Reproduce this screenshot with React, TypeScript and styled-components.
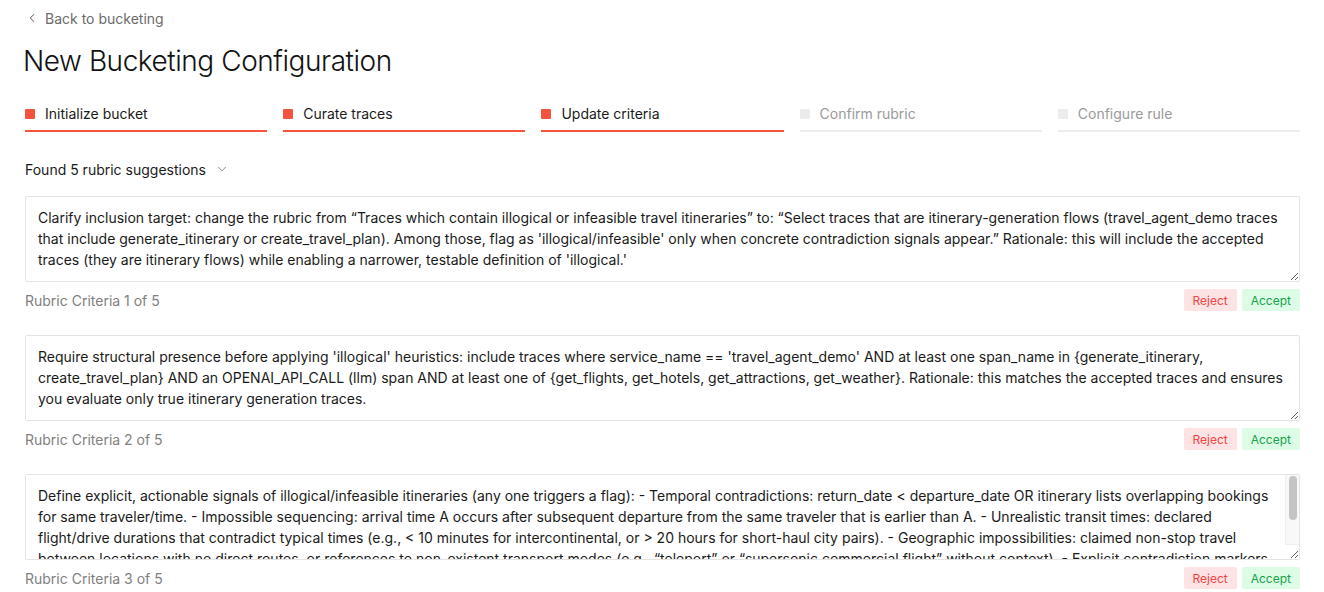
import React, { useLayoutEffect, useRef, useState } from "react";
import styled, { createGlobalStyle } from "styled-components";
import { ChevronLeft, ChevronDown } from "lucide-react";

const GlobalStyle = createGlobalStyle`
  html, body { margin: 0; padding: 0; overflow: hidden; background: #ffffff; }
  body { font-family: Inter, "Noto Sans", sans-serif; color: #1a1a1a; }
  * { box-sizing: border-box; }
`;

const Page = styled.div`
  padding: 8px 24px 0 25px;
  display: flex;
  flex-direction: column;
`;

const BackLink = styled.a`
  display: flex;
  align-items: center;
  gap: 6px;
  font-size: 14px;
  color: #6b6b6b;
  text-decoration: none;
  height: 20px;
  cursor: pointer;
`;

const Title = styled.h1`
  margin: 15px 0 0 -2px;
  font-size: 28px;
  font-weight: 300;
  line-height: 36px;
  letter-spacing: -0.45px;
  color: #111;
`;

const Steps = styled.div`
  display: grid;
  grid-template-columns: repeat(5, 1fr);
  gap: 16px;
  margin-top: 24px;
`;

const Step = styled.div<{ $active: boolean }>`
  display: flex;
  align-items: center;
  gap: 10px;
  height: 29px;
  padding-bottom: 6px;
  border-bottom: 2px solid ${(p) => (p.$active ? "#f5533c" : "#ededed")};
  font-size: 14px;
  color: ${(p) => (p.$active ? "#1a1a1a" : "#9a9a9a")};
`;

const StepMark = styled.span<{ $active: boolean }>`
  width: 10px;
  height: 10px;
  border-radius: 1px;
  background: ${(p) => (p.$active ? "#f5533c" : "#ececec")};
`;

const SuggestHeader = styled.div`
  display: flex;
  align-items: center;
  gap: 9px;
  margin-top: 27px;
  font-size: 14px;
  color: #1a1a1a;
  height: 20px;
  svg { color: #777; }
`;

const List = styled.div`
  display: flex;
  flex-direction: column;
  gap: 24px;
  margin-top: 17px;
`;

const Card = styled.div`
  display: flex;
  flex-direction: column;
  gap: 7px;
`;

const AreaWrap = styled.div`
  position: relative;
  display: flex;
`;

const Area = styled.textarea`
  width: 100%;
  height: 86px;
  padding: 10px 12px;
  border: 1px solid #e4e4e4;
  border-radius: 2px;
  font-family: Inter, "Noto Sans", sans-serif;
  font-size: 14px;
  line-height: 21px;
  color: #1a1a1a;
  resize: vertical;
  outline: none;
`;

const ScrollTrack = styled.div`
  position: absolute;
  top: 1px;
  right: 1px;
  bottom: 15px;
  width: 14px;
  background: #f8f8f8;
  border-left: 1px solid #efefef;
  border-bottom: 1px solid #efefef;
  pointer-events: none;
`;

const ScrollThumb = styled.div`
  position: absolute;
  left: 3px;
  width: 8px;
  border-radius: 4px;
  background: #c4c4c4;
`;

const Footer = styled.div`
  display: flex;
  align-items: center;
  justify-content: space-between;
`;

const Label = styled.span`
  font-size: 14px;
  color: #808080;
`;

const Actions = styled.div`
  display: flex;
  gap: 5px;
`;

const ActionButton = styled.button<{ $kind: "reject" | "accept" }>`
  height: 22px;
  padding: 0 9px;
  border: none;
  border-radius: 2px;
  font-family: Inter, "Noto Sans", sans-serif;
  font-size: 12px;
  cursor: pointer;
  background: ${(p) => (p.$kind === "reject" ? "#fde3e3" : "#dcfce6")};
  color: ${(p) => (p.$kind === "reject" ? "#ef4444" : "#16a34a")};
`;

const steps = [
  { label: "Initialize bucket", active: true },
  { label: "Curate traces", active: true },
  { label: "Update criteria", active: true },
  { label: "Confirm rubric", active: false },
  { label: "Configure rule", active: false },
];

const suggestions = [
  "Clarify inclusion target: change the rubric from \u201CTraces which contain illogical or infeasible travel itineraries\u201D to: \u201CSelect traces that are itinerary-generation flows (travel_agent_demo traces that include generate_itinerary or create_travel_plan). Among those, flag as 'illogical/infeasible' only when concrete contradiction signals appear.\u201D Rationale: this will include the accepted traces (they are itinerary flows) while enabling a narrower, testable definition of 'illogical.'",
  "Require structural presence before applying 'illogical' heuristics: include traces where service_name == 'travel_agent_demo' AND at least one span_name in {generate_itinerary, create_travel_plan} AND an OPENAI_API_CALL (llm) span AND at least one of {get_flights, get_hotels, get_attractions, get_weather}. Rationale: this matches the accepted traces and ensures you evaluate only true itinerary generation traces.",
  "Define explicit, actionable signals of illogical/infeasible itineraries (any one triggers a flag): - Temporal contradictions: return_date < departure_date OR itinerary lists overlapping bookings for same traveler/time. - Impossible sequencing: arrival time A occurs after subsequent departure from the same traveler that is earlier than A. - Unrealistic transit times: declared flight/drive durations that contradict typical times (e.g., < 10 minutes for intercontinental, or > 20 hours for short-haul city pairs). - Geographic impossibilities: claimed non-stop travel between locations with no direct routes, or references to non-existent transport modes (e.g., \u201Cteleport\u201D or \u201Csupersonic commercial flight\u201D without context). - Explicit contradiction markers within the itinerary text, such as a traveler being in two cities at the same time, or a hotel check-out that precedes check-in.",
  "Exclude traces that fail before itinerary generation completes (e.g., error spans on generate_itinerary or create_travel_plan) so that incomplete outputs are not labeled as illogical.",
  "Add confidence guidance: only flag when at least one concrete contradiction signal is present in the final itinerary output; otherwise mark as not matching.",
];

function CriteriaArea({ text }: { text: string }) {
  const ref = useRef<HTMLTextAreaElement>(null);
  const [thumb, setThumb] = useState<number | null>(null);

  useLayoutEffect(() => {
    const el = ref.current;
    if (!el) return;
    if (el.scrollHeight > el.clientHeight + 1) {
      const track = el.clientHeight - 15 - 4;
      setThumb(Math.max(24, Math.round((track * el.clientHeight) / el.scrollHeight)));
    } else {
      setThumb(null);
    }
  }, [text]);

  return (
    <AreaWrap>
      <Area ref={ref} defaultValue={text} />
      {thumb !== null && (
        <ScrollTrack>
          <ScrollThumb style={{ top: 1, height: thumb }} />
        </ScrollTrack>
      )}
    </AreaWrap>
  );
}

export default function App() {
  return (
    <>
      <GlobalStyle />
      <Page>
        <BackLink>
          <ChevronLeft size={14} strokeWidth={1.75} />
          Back to bucketing
        </BackLink>
        <Title>New Bucketing Configuration</Title>
        <Steps>
          {steps.map((s) => (
            <Step key={s.label} $active={s.active}>
              <StepMark $active={s.active} />
              {s.label}
            </Step>
          ))}
        </Steps>
        <SuggestHeader>
          Found 5 rubric suggestions
          <ChevronDown size={14} strokeWidth={1.5} />
        </SuggestHeader>
        <List>
          {suggestions.map((text, i) => (
            <Card key={i}>
              <CriteriaArea text={text} />
              <Footer>
                <Label>Rubric Criteria {i + 1} of 5</Label>
                <Actions>
                  <ActionButton $kind="reject">Reject</ActionButton>
                  <ActionButton $kind="accept">Accept</ActionButton>
                </Actions>
              </Footer>
            </Card>
          ))}
        </List>
      </Page>
    </>
  );
}
